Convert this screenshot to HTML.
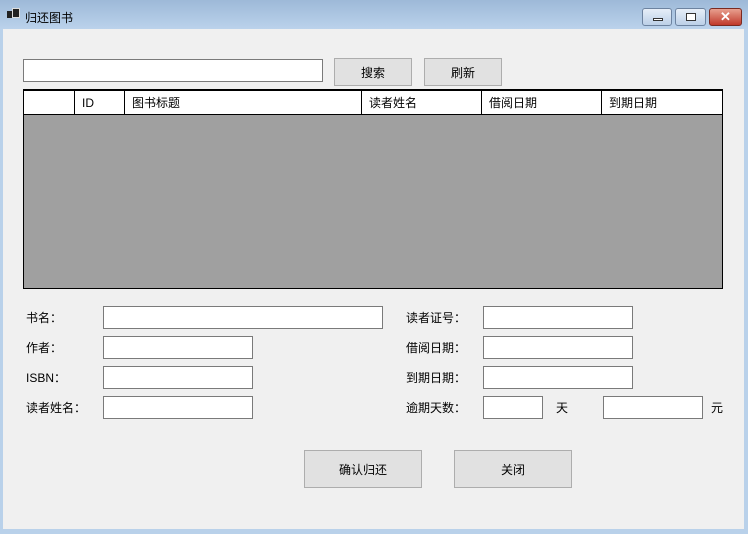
<!DOCTYPE html>
<html><head><meta charset="utf-8"><style>
*{margin:0;padding:0;box-sizing:border-box}
body{width:748px;height:534px;overflow:hidden;position:relative;background:#b9d1ea;font-family:"Liberation Sans","Microsoft YaHei","Noto Sans CJK SC",sans-serif;font-size:12px;color:#000}
.title{position:absolute;left:0;top:0;width:748px;height:30px;background:linear-gradient(#9db9d8,#bcd3ec)}
.client{position:absolute;left:3px;top:29px;width:741px;height:500px;background:#f0f0f0}
.a{position:absolute}
.in{position:absolute;background:#fff;border:1px solid #7a7a7a}
.btn{position:absolute;background:#e1e1e1;border:1px solid #adadad;display:flex;align-items:center;justify-content:center}
.lbl{position:absolute;line-height:14px}
.wb{position:absolute;top:8px;height:18px;border:1px solid #6d83a0;border-radius:3px;background:linear-gradient(#e6eef8,#bcd0e8)}
</style></head><body>
<div class="title"></div>
<div class="a" style="left:7px;top:11px;width:6px;height:7px;background:#222"></div>
<div class="a" style="left:12px;top:8px;width:8px;height:10px;background:#222;border:1px solid #ddd"></div>
<div class="lbl" style="left:25px;top:11px">归还图书</div>
<div class="wb" style="left:642px;width:30px"><div class="a" style="left:10px;top:9px;width:10px;height:3px;border:1px solid #333;background:#fff"></div></div>
<div class="wb" style="left:675px;width:31px"><div class="a" style="left:10px;top:4px;width:10px;height:8px;border:1px solid #333;background:#fff"></div></div>
<div class="wb" style="left:709px;width:33px;background:linear-gradient(#e8a08f,#c0392b);border-color:#7a2a20;color:#fff;font-weight:bold;text-align:center;line-height:15px;font-size:13px">✕</div>
<div class="client"></div>

<div class="in" style="left:23px;top:59px;width:300px;height:23px"></div>
<div class="btn" style="left:334px;top:58px;width:78px;height:28px">搜索</div>
<div class="btn" style="left:424px;top:58px;width:78px;height:28px">刷新</div>

<div class="a" style="left:23px;top:89px;width:700px;height:200px;border:2px solid #000;border-width:2px 1px 1px 1px;background:#a0a0a0"></div>
<div class="a" style="left:24px;top:91px;width:698px;height:24px;background:#fff;border-bottom:1px solid #000"></div>
<div class="a" style="left:74px;top:90px;width:1px;height:24px;background:#000"></div>
<div class="a" style="left:124px;top:90px;width:1px;height:24px;background:#000"></div>
<div class="a" style="left:361px;top:90px;width:1px;height:24px;background:#000"></div>
<div class="a" style="left:481px;top:90px;width:1px;height:24px;background:#000"></div>
<div class="a" style="left:601px;top:90px;width:1px;height:24px;background:#000"></div>
<div class="lbl" style="left:82px;top:96px">ID</div>
<div class="lbl" style="left:132px;top:96px">图书标题</div>
<div class="lbl" style="left:369px;top:96px">读者姓名</div>
<div class="lbl" style="left:489px;top:96px">借阅日期</div>
<div class="lbl" style="left:609px;top:96px">到期日期</div>

<div class="lbl" style="left:26px;top:311px">书名：</div>
<div class="lbl" style="left:26px;top:341px">作者：</div>
<div class="lbl" style="left:26px;top:371px">ISBN：</div>
<div class="lbl" style="left:26px;top:401px">读者姓名：</div>
<div class="in" style="left:103px;top:306px;width:280px;height:23px"></div>
<div class="in" style="left:103px;top:336px;width:150px;height:23px"></div>
<div class="in" style="left:103px;top:366px;width:150px;height:23px"></div>
<div class="in" style="left:103px;top:396px;width:150px;height:23px"></div>

<div class="lbl" style="left:406px;top:311px">读者证号：</div>
<div class="lbl" style="left:406px;top:341px">借阅日期：</div>
<div class="lbl" style="left:406px;top:371px">到期日期：</div>
<div class="lbl" style="left:406px;top:401px">逾期天数：</div>
<div class="in" style="left:483px;top:306px;width:150px;height:23px"></div>
<div class="in" style="left:483px;top:336px;width:150px;height:23px"></div>
<div class="in" style="left:483px;top:366px;width:150px;height:23px"></div>
<div class="in" style="left:483px;top:396px;width:60px;height:23px"></div>
<div class="lbl" style="left:556px;top:401px">天</div>
<div class="in" style="left:603px;top:396px;width:100px;height:23px"></div>
<div class="lbl" style="left:711px;top:401px">元</div>

<div class="btn" style="left:304px;top:450px;width:118px;height:38px">确认归还</div>
<div class="btn" style="left:454px;top:450px;width:118px;height:38px">关闭</div>
</body></html>
